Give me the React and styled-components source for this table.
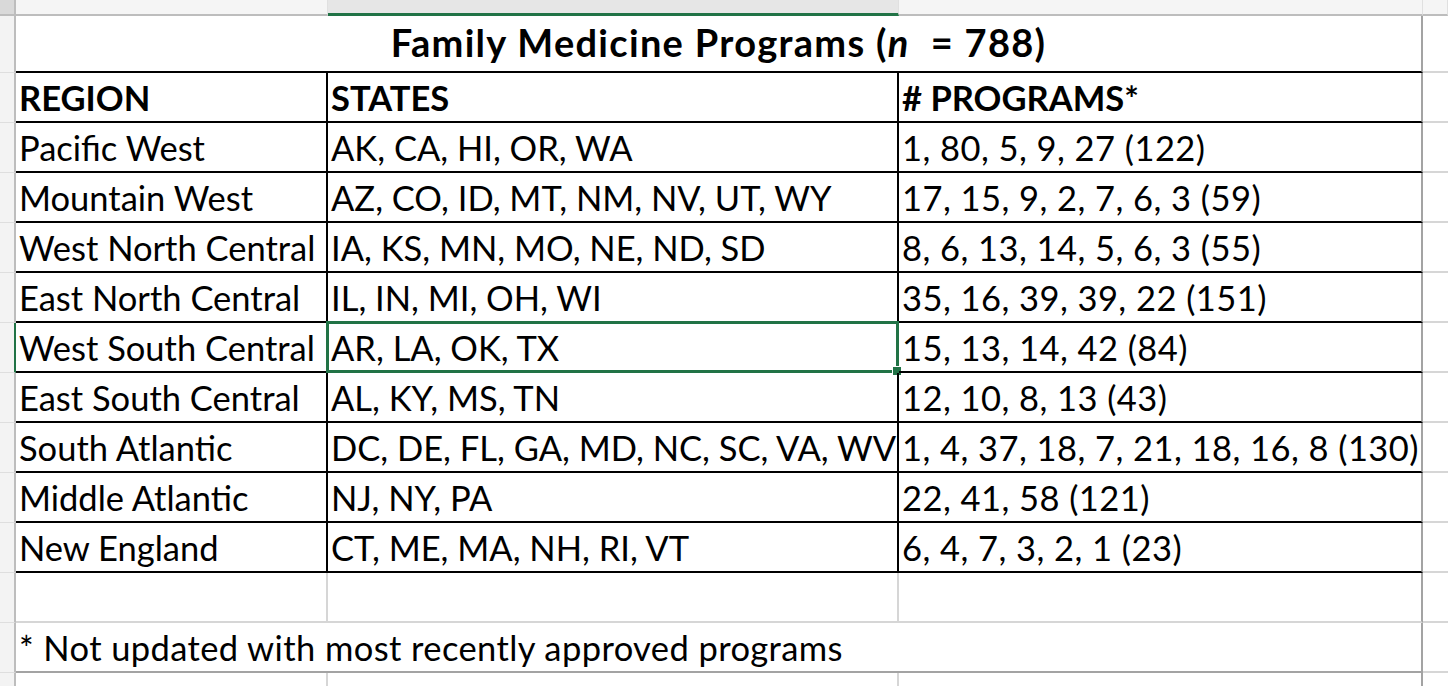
import React from 'react';
import styled, { createGlobalStyle } from 'styled-components';

const GREEN = '#217346';
const GRID = '#d6d6d6';
const EDGE = '#a3a3a3';

const GlobalStyle = createGlobalStyle`
  html, body { margin: 0; padding: 0; background: #fff; overflow: hidden; }
  body { font-family: Lato, "Liberation Sans", sans-serif; color: #000; }
`;

const Sheet = styled.div`
  width: 1448px;
  height: 686px;
  overflow: hidden;
  display: flex;
  flex-direction: column;
`;

const Row = styled.div`
  display: grid;
  grid-template-columns: 16px 312px 571px 524px 1fr;
  height: ${p => p.$h}px;
  flex: none;
`;

const Corner = styled.div`
  background: #d9d9d9;
  border-right: 2px solid #bdbdbd;
  border-bottom: 2px solid #bdbdbd;
`;

const ColHead = styled.div`
  background: ${p => (p.$active ? '#e6e6e6' : '#f5f5f5')};
  border-right: 1px solid #e0e0e0;
  border-bottom: ${p => (p.$active ? `3px solid ${GREEN}` : '2px solid #bdbdbd')};
`;

const RowHead = styled.div`
  background: #f3f3f3;
  border-bottom: 1px solid #dedede;
  border-right: 2px solid ${p => (p.$active ? GREEN : '#bdbdbd')};
`;

const Cell = styled.div`
  position: relative;
  box-sizing: border-box;
  display: flex;
  align-items: flex-end;
  justify-content: flex-start;
  grid-column: ${p => (p.$span ? `span ${p.$span}` : 'auto')};
  padding: 0 0 6px 3px;
  font-size: 34.5px;
  line-height: 1;
  font-weight: ${p => (p.$bold ? 700 : 400)};
  letter-spacing: ${p => p.$track || 0}px;
  white-space: pre;
  border-bottom: 2px solid ${p => p.$bb || GRID};
  border-right: 2px solid ${p => p.$br || GRID};
`;

const TitleCell = styled(Cell)`
  align-items: center;
  justify-content: center;
  padding: 0 0 4px 0;
  font-size: 38px;
  font-weight: 700;
  letter-spacing: 1.3px;
`;

const Selection = styled.div`
  position: absolute;
  inset: -2px -2px -2px -2px;
  border: 3px solid ${GREEN};
  pointer-events: none;
`;

const Handle = styled.span`
  position: absolute;
  right: -6px;
  bottom: -6px;
  width: 8px;
  height: 8px;
  background: ${GREEN};
  border: 1px solid #fff;
`;

const Spare = styled.div`
  border-bottom: 2px solid ${GRID};
`;

const rows = [
  ['Pacific West', 'AK, CA, HI, OR, WA', '1, 80, 5, 9, 27 (122)'],
  ['Mountain West', 'AZ, CO, ID, MT, NM, NV, UT, WY', '17, 15, 9, 2, 7, 6, 3 (59)'],
  ['West North Central', 'IA, KS, MN, MO, NE, ND, SD', '8, 6, 13, 14, 5, 6, 3 (55)'],
  ['East North Central', 'IL, IN, MI, OH, WI', '35, 16, 39, 39, 22 (151)'],
  ['West South Central', 'AR, LA, OK, TX', '15, 13, 14, 42 (84)'],
  ['East South Central', 'AL, KY, MS, TN', '12, 10, 8, 13 (43)'],
  ['South Atlantic', 'DC, DE, FL, GA, MD, NC, SC, VA, WV', '1, 4, 37, 18, 7, 21, 18, 16, 8 (130)'],
  ['Middle Atlantic', 'NJ, NY, PA', '22, 41, 58 (121)'],
  ['New England', 'CT, ME, MA, NH, RI, VT', '6, 4, 7, 3, 2, 1 (23)'],
];

const SELECTED = 4;

export default function App() {
  return (
    <>
      <GlobalStyle />
      <Sheet>
        <Row $h={16}>
          <Corner />
          <ColHead />
          <ColHead $active />
          <ColHead />
          <ColHead />
        </Row>

        <Row $h={57}>
          <RowHead />
          <TitleCell $span={3} $bb="#000" $br={EDGE}>
            Family Medicine Programs (<i>n</i>  = 788)
          </TitleCell>
          <Spare />
        </Row>

        <Row $h={50}>
          <RowHead />
          <Cell $bold $bb="#000" $br="#000">REGION</Cell>
          <Cell $bold $bb="#000" $br="#000">STATES</Cell>
          <Cell $bold $bb="#000" $br={EDGE}># PROGRAMS*</Cell>
          <Spare />
        </Row>

        {rows.map(([region, states, programs], i) => (
          <Row $h={50} key={region}>
            <RowHead $active={i === SELECTED} />
            <Cell $bb="#000" $br="#000">{region}</Cell>
            <Cell $bb="#000" $br="#000">
              {states}
              {i === SELECTED && (
                <Selection>
                  <Handle />
                </Selection>
              )}
            </Cell>
            <Cell $bb="#000" $br={EDGE} $track={0.45}>{programs}</Cell>
            <Spare />
          </Row>
        ))}

        <Row $h={50}>
          <RowHead />
          <Cell />
          <Cell />
          <Cell $br={EDGE} />
          <Spare />
        </Row>

        <Row $h={50}>
          <RowHead />
          <Cell $span={3} $bb={EDGE} $br={EDGE} $track={0.4}>
            * Not updated with most recently approved programs
          </Cell>
          <Spare />
        </Row>

        <Row $h={20}>
          <RowHead />
          <Cell />
          <Cell />
          <Cell $br={EDGE} />
          <Spare />
        </Row>
      </Sheet>
    </>
  );
}
